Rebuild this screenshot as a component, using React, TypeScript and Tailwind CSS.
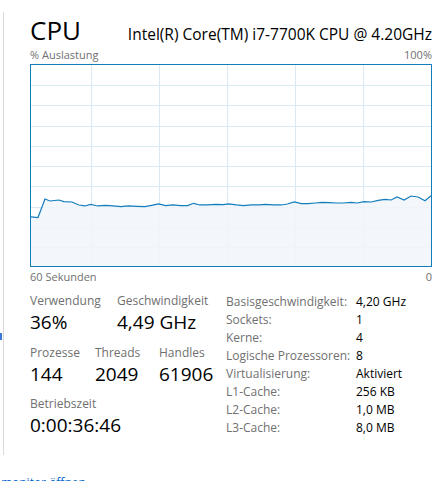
import React from 'react';

// Punkte in 3x-Zoom-Koordinaten (Box innen: x 91..1294, y 14..620)
const trace: [number, number][] = [
  [91, 472], [112, 474], [133, 418], [148, 424], [175, 421], [190, 426], [214, 427], [235, 436],
  [253, 439], [271, 434], [292, 439], [316, 437], [337, 439], [361, 441], [385, 439], [409, 440],
  [433, 441], [454, 437], [475, 433], [496, 438], [517, 436], [541, 438], [562, 438], [580, 431],
  [598, 436], [622, 436], [646, 434], [670, 435], [685, 433], [709, 436], [730, 438], [754, 436],
  [778, 436], [796, 434], [820, 436], [844, 436], [862, 433], [883, 427], [904, 432], [925, 432],
  [946, 430], [967, 428], [988, 429], [1009, 430], [1030, 430], [1054, 428], [1072, 430], [1093, 426],
  [1114, 427], [1135, 422], [1156, 419], [1174, 421], [1192, 412], [1213, 421], [1234, 409],
  [1255, 412], [1276, 423], [1294, 408],
];

const vLines = [61, 129, 197, 265, 333];
const hLines = [21, 41, 62, 82, 102, 122, 143, 163, 183];

const CpuGraph: React.FC = () => {
  const line = trace.map(([x, y]) => `${x},${y}`).join(' ');
  const area = `91,620 ${line} 1294,620`;
  return (
    <div className="relative h-[203px] w-[402px] border border-[#117dbb] bg-white">
      <svg className="absolute inset-0 h-full w-full" width="400" height="201" viewBox="0 0 400 201">
        {vLines.map((x) => (
          <line key={x} x1={x - 0.5} y1="0" x2={x - 0.5} y2="201" stroke="#d9eaf4" strokeWidth="1" />
        ))}
        {hLines.map((y) => (
          <line key={y} x1="0" y1={y - 0.5} x2="400" y2={y - 0.5} stroke="#d9eaf4" strokeWidth="1" />
        ))}
      </svg>
      <svg className="absolute inset-0 h-full w-full" viewBox="91 14 1203 606" preserveAspectRatio="none">
        <polygon points={area} fill="#f1f6fa" fillOpacity="0.85" />
        <polyline points={line} fill="none" stroke="#117dbb" strokeWidth="1.2" vectorEffect="non-scaling-stroke" />
      </svg>
    </div>
  );
};

const Stat: React.FC<{ label: string; value: string; w: string }> = ({ label, value, w }) => (
  <div className={w}>
    <div className="h-[16px] text-[12px] leading-[16px] text-[#707070]">{label}</div>
    <div className="h-[26px] text-[19px] leading-[26px] text-black">{value}</div>
  </div>
);

const info: [string, string][] = [
  ['Basisgeschwindigkeit:', '4,20 GHz'],
  ['Sockets:', '1'],
  ['Kerne:', '4'],
  ['Logische Prozessoren:', '8'],
  ['Virtualisierung:', 'Aktiviert'],
  ['L1-Cache:', '256 KB'],
  ['L2-Cache:', '1,0 MB'],
  ['L3-Cache:', '8,0 MB'],
];

export default function App() {
  return (
    <div
      className="relative h-[481px] w-[440px] overflow-hidden bg-white"
      style={{ fontFamily: '"Open Sans", "Noto Sans", sans-serif' }}
    >
      <div className="absolute left-0 top-[333px] h-[7px] w-[2px] bg-[#3b78d8]" />
      <div className="ml-[3px] mt-[12px] h-[443px] border-l border-[#dadada] pl-[26px] pr-[8px]">
        <div className="flex h-[36px] items-baseline justify-between">
          <span className="text-[26px] leading-[36px] text-black">CPU</span>
          <span className="text-[15.5px] leading-[36px] text-black">Intel(R) Core(TM) i7-7700K CPU @ 4.20GHz</span>
        </div>
        <div className="flex h-[16px] items-start justify-between text-[11px] leading-[14px] text-[#707070]">
          <span>% Auslastung</span>
          <span>100%</span>
        </div>
        <CpuGraph />
        <div className="flex h-[18px] items-end justify-between text-[11px] leading-[16px] text-[#707070]">
          <span>60 Sekunden</span>
          <span>0</span>
        </div>
        <div className="mt-[8px] flex">
          <div className="w-[196px]">
            <div className="flex">
              <Stat label="Verwendung" value="36%" w="w-[87px]" />
              <Stat label="Geschwindigkeit" value="4,49 GHz" w="w-[109px]" />
            </div>
            <div className="mt-[10px] flex">
              <Stat label="Prozesse" value="144" w="w-[65px]" />
              <Stat label="Threads" value="2049" w="w-[64px]" />
              <Stat label="Handles" value="61906" w="w-[67px]" />
            </div>
            <div className="mt-[9px] flex">
              <Stat label="Betriebszeit" value="0:00:36:46" w="w-[150px]" />
            </div>
          </div>
          <div className="grid grid-cols-[130px_auto] auto-rows-[18px] text-[12px] leading-[18px]">
            {info.map(([k, v]) => (
              <React.Fragment key={k}>
                <span className="text-[#707070]">{k}</span>
                <span className="text-black">{v}</span>
              </React.Fragment>
            ))}
          </div>
        </div>
      </div>
      <div className="mt-[20px] -ml-[64px] whitespace-nowrap text-[12px] leading-[16px] text-[#0066cc]">
        Ressourcenmonitor öffnen
      </div>
    </div>
  );
}
